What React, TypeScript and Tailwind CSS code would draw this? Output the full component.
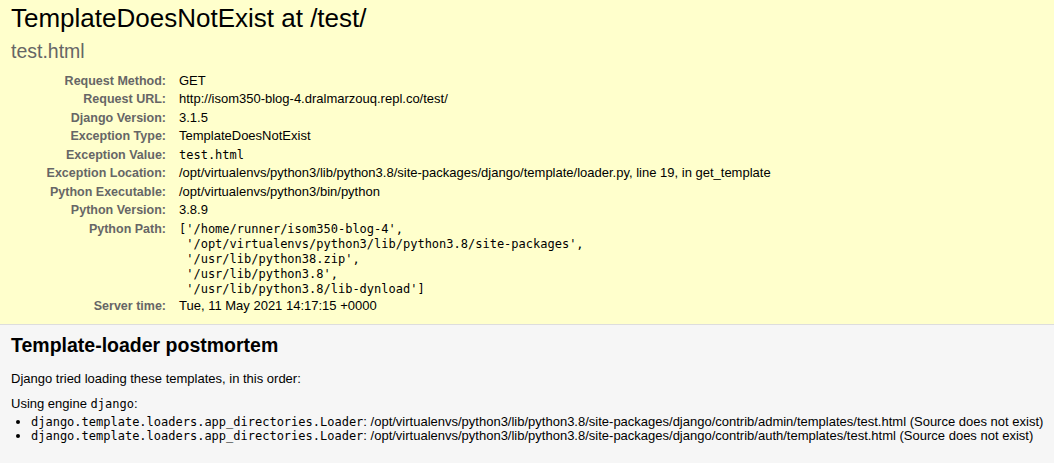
import React from "react";

const rows: { label: string; value: React.ReactNode; mono?: boolean }[] = [
  { label: "Request Method:", value: "GET" },
  { label: "Request URL:", value: "http://isom350-blog-4.dralmarzouq.repl.co/test/" },
  { label: "Django Version:", value: "3.1.5" },
  { label: "Exception Type:", value: "TemplateDoesNotExist" },
  { label: "Exception Value:", value: "test.html", mono: true },
  {
    label: "Exception Location:",
    value:
      "/opt/virtualenvs/python3/lib/python3.8/site-packages/django/template/loader.py, line 19, in get_template",
  },
  { label: "Python Executable:", value: "/opt/virtualenvs/python3/bin/python" },
  { label: "Python Version:", value: "3.8.9" },
];

const pathLines = [
  "['/home/runner/isom350-blog-4',",
  " '/opt/virtualenvs/python3/lib/python3.8/site-packages',",
  " '/usr/lib/python38.zip',",
  " '/usr/lib/python3.8',",
  " '/usr/lib/python3.8/lib-dynload']",
];

function Label({ children }: { children: React.ReactNode }) {
  return (
    <div className="w-[155px] shrink-0 text-right font-bold text-[#666666] text-[12.5px]">
      {children}
    </div>
  );
}

export default function App() {
  return (
    <div className="min-h-screen flex flex-col bg-[#f6f6f6] text-black [font-family:'Liberation_Sans',Arial,Helvetica,sans-serif] text-[13px]">
      <div className="bg-[#ffffcc] border-b border-[#dddddd] pl-[11px] pt-[3px] pb-[9px]">
        <h1 className="text-[26px] leading-[30px] font-normal">TemplateDoesNotExist at /test/</h1>
        <h2 className="mt-[6.5px] mb-[10px] text-[19.5px] leading-[22px] font-normal text-[#666666]">
          test.html
        </h2>
        <div className="flex flex-col leading-[14.5px]">
          {rows.map((r) => (
            <div key={r.label} className="flex py-[2px]">
              <Label>{r.label}</Label>
              <div
                className={
                  r.mono
                    ? "pl-[13px] whitespace-pre [font-family:'DejaVu_Sans_Mono',Menlo,monospace] text-[12px]"
                    : "pl-[13px] whitespace-nowrap"
                }
              >
                {r.value}
              </div>
            </div>
          ))}
          <div className="flex pt-[2px]">
            <Label>Python Path:</Label>
            <pre className="pl-[13px] leading-[15px] whitespace-pre [font-family:'DejaVu_Sans_Mono',Menlo,monospace] text-[12px]">
              {pathLines.join("\n")}
            </pre>
          </div>
          <div className="flex py-[2px]">
            <Label>Server time:</Label>
            <div className="pl-[13px] whitespace-nowrap">Tue, 11 May 2021 14:17:15 +0000</div>
          </div>
        </div>
      </div>
      <div className="flex-1 bg-[#f6f6f6] pl-[11px] pt-[9px] pb-[10px]">
        <h2 className="text-[19.5px] leading-[22px] font-bold mb-[16px]">Template-loader postmortem</h2>
        <p className="leading-[14.5px]">Django tried loading these templates, in this order:</p>
        <p className="mt-[10.7px] mb-[3.3px] leading-[14.5px]">
          Using engine{" "}
          <code className="[font-family:'DejaVu_Sans_Mono',Menlo,monospace] text-[12px]">django</code>:
        </p>
        <ul className="ml-[20px] list-disc leading-[14.3px]">
          <li className="whitespace-nowrap">
            <code className="[font-family:'DejaVu_Sans_Mono',Menlo,monospace] text-[12px]">
              django.template.loaders.app_directories.Loader
            </code>
            : /opt/virtualenvs/python3/lib/python3.8/site-packages/django/contrib/admin/templates/test.html (Source does
            not exist)
          </li>
          <li className="whitespace-nowrap">
            <code className="[font-family:'DejaVu_Sans_Mono',Menlo,monospace] text-[12px]">
              django.template.loaders.app_directories.Loader
            </code>
            : /opt/virtualenvs/python3/lib/python3.8/site-packages/django/contrib/auth/templates/test.html (Source does
            not exist)
          </li>
        </ul>
      </div>
    </div>
  );
}
